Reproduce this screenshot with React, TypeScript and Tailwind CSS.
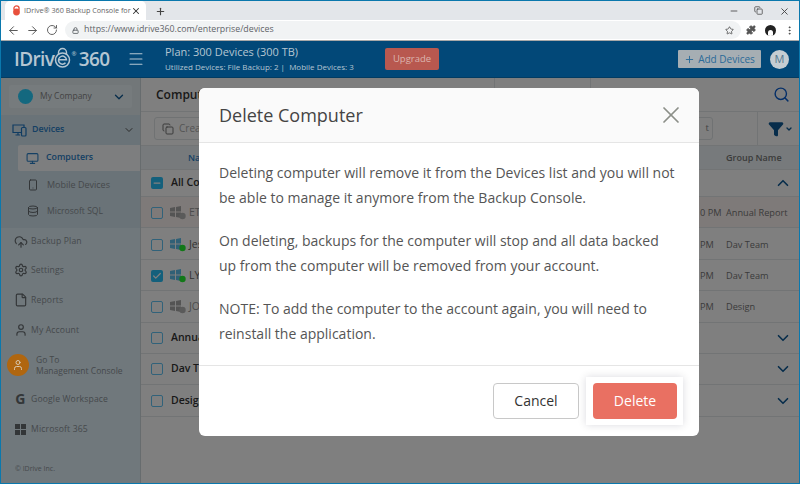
import { ArrowLeft, ArrowRight, ChevronDown, ChevronUp, Database, File, Filter, Lock, Menu, Minus, Monitor, MoreVertical, Plus, Puzzle, RotateCw, Search, Settings, Smartphone, Star, User, X, Check, CloudUpload, Copy } from 'lucide-react'
import type { ReactNode } from 'react'

function WinIcon({ online }: { online?: boolean }) {
  return (
    <svg width="16" height="14" viewBox="0 0 16 14" className="shrink-0">
      <g fill={online ? '#60c0ec' : '#a8a8a8'}>
        <path d="M0 2l5-1v4.500H0zM6 1l5-1v5.500H6zM0 6.500h5V11l-5-1zM6 6.500h5V12l-5-1z" />
      </g>
      <circle cx="12.500" cy="10" r="3.200" fill={online ? '#24f030' : '#b4b4b4'} />
    </svg>
  )
}

function Box({ state }: { state?: 'check' | 'minus' }) {
  if (state) {
    return (
      <span className="w-3 h-3 bg-[#28c0f8] rounded-[2px] flex items-center justify-center text-white shrink-0">
        {state === 'check' ? <Check size={10} strokeWidth={3} /> : <Minus size={10} strokeWidth={3} />}
      </span>
    )
  }
  return <span className="w-3 h-3 border border-[#62c4f4] rounded-[2px] shrink-0" />
}

function Row({ check, label, online, time, group, bold, chevron, tint, short }: {
  check?: 'check' | 'minus'
  label: string
  online?: boolean
  time?: string
  group?: string
  bold?: boolean
  chevron?: 'up' | 'down'
  tint?: boolean
  short?: boolean
}) {
  return (
    <div className={`flex items-center pl-[10px] border-b border-[#e4e8ea] shrink-0 ${short ? 'h-[27px]' : 'h-[31.4px]'} ${bold ? '' : 'pt-[2px]'} ${tint ? 'bg-[#fdf4f2]' : ''}`}>
      <Box state={check} />
      {!bold && <span className="ml-[7px] mr-[3px]"><WinIcon online={online} /></span>}
      <span className={`text-[10.5px] ${bold ? 'ml-2 font-semibold text-[#333]' : online ? 'text-[#666]' : 'text-[#999]'}`}>{label}</span>
      <span className="flex-1" />
      {time && <span className="text-[9.2px] text-[#777] w-[26px]">{time}</span>}
      {group && <span className="text-[9.2px] text-[#777] w-[73px]">{group}</span>}
      {chevron === 'up' && <ChevronUp size={18} strokeWidth={2.2} className="mr-[7px] text-[#0e5a96]" />}
      {chevron === 'down' && <ChevronDown size={18} strokeWidth={2.2} className="mr-[7px] text-[#0e5a96]" />}
    </div>
  )
}

function NavItem({ icon, label, first }: { icon: ReactNode; label: string; first?: boolean }) {
  return (
    <div className={`flex items-center pl-[10px] text-[8.6px] tracking-[0.15px] text-[#8c9398] ${first ? 'h-[27px]' : 'h-[30px]'}`}>
      <span className="w-[19px] flex justify-center text-[#666c70]">{icon}</span>
      <span className="ml-[1px]">{label}</span>
    </div>
  )
}

export default function App() {
  return (
    <div className="w-[800px] h-[484px] overflow-hidden flex flex-col border border-[#0a78ad] font-['Open_Sans',sans-serif]">
      {/* Browser chrome */}
      <div className="h-[19px] bg-[#e3e6ea] flex items-end pl-[4px] shrink-0">
        <div className="w-[141px] h-[19px] bg-white rounded-t-[5px] flex items-center pl-[7px] pr-[6px] text-[7.2px] text-[#666] whitespace-nowrap overflow-hidden">
          <svg width="9" height="11" viewBox="0 0 9 11" className="shrink-0 mr-[3px]">
            <circle cx="4.500" cy="3.500" r="2.600" fill="none" stroke="#e8503c" strokeWidth="1.300" />
            <circle cx="4.500" cy="7" r="3.400" fill="#e8503c" />
          </svg>
          <span className="flex-1">IDrive® 360 Backup Console for</span>
          <X size={10} strokeWidth={2.5} className="shrink-0 text-[#333]" />
        </div>
        <Plus size={11} strokeWidth={2.5} className="ml-[9px] mb-[3px] text-[#444]" />
        <span className="flex-1" />
        <Minus size={10} className="mb-[4px] mr-[15px] text-[#444]" />
        <Copy size={9} className="mb-[5px] mr-[16px] text-[#444]" />
        <X size={11} className="mb-[3px] mr-[9px] text-[#444]" />
      </div>
      <div className="h-[21px] bg-white flex items-center shrink-0 border-b border-[#a8a8a8]">
        <ArrowLeft size={13} strokeWidth={1.8} className="ml-[6px] text-[#555]" />
        <ArrowRight size={13} strokeWidth={1.8} className="ml-[6px] text-[#555]" />
        <RotateCw size={12} strokeWidth={1.8} className="ml-[7px] text-[#555]" />
        <div className="ml-[7px] w-[676px] h-[18px] rounded-full bg-[#f1f3f4] flex items-center pl-[7px] pr-[7px] text-[8.8px] text-[#5f6368]">
          <Lock size={7} strokeWidth={3} className="mr-[5px]" />
          <span className="flex-1">https://www.idrive360.com/enterprise/devices</span>
          <Star size={9} className="text-[#444]" />
        </div>
        <Puzzle size={10} fill="#555" className="ml-[5px] text-[#555]" />
        <span className="ml-[9px] w-[11px] h-[11px] rounded-full bg-[#222] flex items-end justify-center overflow-hidden"><span className="w-[5px] h-[6px] bg-white rounded-t-full" /></span>
        <MoreVertical size={11} className="ml-[8px] text-[#444]" />
      </div>

      <div className="flex-1 relative flex flex-col min-h-0">
        {/* App header */}
        <header className="relative z-10 h-[37px] bg-[#024878] border-b border-[#033c62] flex items-center shrink-0 text-[#b5c6d2]">
          <div className="ml-[13px] w-[100px] flex items-center text-[19px] font-semibold tracking-[-0.6px] whitespace-nowrap">
            <span>IDriv</span>
            <svg width="17" height="21" viewBox="0 0 17 21" className="-mt-[3px] shrink-0">
              <path d="M4.500 8V5.500a4 4 0 0 1 8 0V8" fill="none" stroke="#b5c6d2" strokeWidth="1.400" />
              <circle cx="8.500" cy="13" r="7" fill="none" stroke="#b5c6d2" strokeWidth="1.500" />
              <path d="M4.500 12.800h8a4 4 0 1 0-1 3" fill="none" stroke="#b5c6d2" strokeWidth="1.500" />
            </svg>
            <span className="text-[6px] -mt-[9px] mr-[3px]">®</span>
            <span>360</span>
          </div>
          <Menu size={18} strokeWidth={1.4} className="ml-[13px]" />
          <div className="ml-[20px] w-[220px]">
            <div className="text-[11px] leading-[14px]">Plan: 300 Devices (300 TB)</div>
            <div className="text-[8px] leading-[13px] mt-[1px] whitespace-nowrap">Utilized Devices: File Backup: 2 |&nbsp; Mobile Devices: 3</div>
          </div>
          <button className="w-[54px] h-[22px] bg-[#b8584f] rounded-[2px] text-[9.5px] text-[#dbb4ae]">Upgrade</button>
          <span className="flex-1" />
          <div className="w-[83px] h-[18px] bg-[#a6aeb3] rounded-[1px] flex items-center justify-center text-[10px] text-[#2a6a98]">
            <Plus size={11} className="mr-[3px]" />Add Devices
          </div>
          <span className="ml-[9px] mr-[10px] w-[19px] h-[19px] rounded-full bg-[#c6cdd2] text-[#55788f] text-[11px] flex items-center justify-center">M</span>
        </header>

        <div className="flex-1 flex min-h-0">
          {/* Sidebar */}
          <aside className="w-[140px] bg-[#e0f0f8] shrink-0 flex flex-col border-r border-[#cfd8dc]">
            <div className="pt-[7px] pb-[7px] pl-[8px] pr-[8px] bg-[#e4eef2]">
              <div className="h-[23px] bg-[#ecf6fa] rounded-[2px] flex items-center pl-[9px] pr-[6px] text-[8.5px] text-[#888]">
                <span className="w-[15px] h-[15px] rounded-full bg-[#28d0ff] mr-[7px]" />
                <span className="flex-1">My Company</span>
                <ChevronDown size={14} strokeWidth={2.2} className="text-[#0e5a96]" />
              </div>
            </div>
            <div className="bg-[#d4e6f0] pb-[4px]">
              <div className="h-[30px] flex items-center pl-[11px] pr-[5px] text-[8.8px] font-semibold text-[#2a80c8]">
                <svg width="15" height="13" viewBox="0 0 15 13" fill="none" stroke="#2078c4" strokeWidth="1.200" className="mr-[5px] shrink-0">
                  <path d="M9 8.500H1V1h11v2M6 8.500V11M3.500 11H8" />
                  <rect x="9.500" y="3.500" width="4.500" height="8.500" rx="1" />
                </svg>
                <span className="flex-1">Devices</span>
                <ChevronDown size={12} className="text-[#555]" />
              </div>
              <div className="ml-[17px] h-[26px] bg-white/90 rounded-l-[2px] flex items-center pl-[8px] text-[8.8px] font-semibold text-[#2a80c8]">
                <Monitor size={13} className="mr-[7px]" />Computers
              </div>
              <div className="h-[27px] pl-[26px] flex items-center text-[9px] text-[#8c9398]"><Smartphone size={12} className="mr-[8px] text-[#666c70]" />Mobile Devices</div>
              <div className="h-[26px] pl-[26px] flex items-center text-[8.6px] text-[#8c9398]"><Database size={12} className="mr-[8px] text-[#666c70]" />Microsoft SQL</div>
            </div>
            <NavItem first icon={<CloudUpload size={14} />} label="Backup Plan" />
            <NavItem icon={<Settings size={14} />} label="Settings" />
            <NavItem icon={<File size={14} />} label="Reports" />
            <NavItem icon={<User size={14} />} label="My Account" />
            <div className="h-[39px] flex items-center pl-[6px] text-[8.5px] leading-[11px] text-[#8c9398]">
              <span className="relative z-10 w-[22px] h-[22px] rounded-full bg-[#b0660f] flex items-center justify-center text-[#d8c8b0] mr-[7px]"><User size={12} /></span>
              <span>Go To<br />Management Console</span>
            </div>
            <NavItem icon={<span className="font-bold text-[14px] leading-none">G</span>} label="Google Workspace" />
            <NavItem icon={
              <svg width="11" height="11" viewBox="0 0 11 11" fill="#666c70"><path d="M0 0h5v5H0zM6 0h5v5H6zM0 6h5v5H0zM6 6h5v5H6z" /></svg>
            } label="Microsoft 365" />
            <span className="flex-1" />
            <div className="pl-[14px] pb-[9px] text-[7px] text-[#8c9398]">© IDrive Inc.</div>
          </aside>

          {/* Content */}
          <main className="flex-1 bg-white flex flex-col min-w-0">
            <div className="h-[34px] pl-[15px] border-b border-[#e4e8ea] flex items-stretch text-[12px] font-semibold text-[#333] shrink-0">
              <span className="flex-1 self-center">Computers</span>
              <span className="w-[97px] border-l border-r border-[#e4e8ea]" />
              <span className="w-[208px] flex items-center justify-end pr-[9px]">
                <Search size={17} className="text-[#0a5ed0]" />
              </span>
            </div>
            <div className="h-[34px] flex items-center pl-[13px] border-b border-[#e4e8ea] shrink-0">
              <div className="h-[23px] w-[120px] border border-[#e0e4e6] rounded-[3px] flex items-center pl-[7px] text-[10px] text-[#aaa]">
                <Copy size={12} className="mr-[5px] text-[#777]" />Create
              </div>
              <span className="flex-1" />
              <div className="h-[23px] w-[50px] mr-[44px] border border-[#e0e4e6] rounded-[3px] flex items-center justify-end pr-[3px] text-[9.5px] text-[#888]">t</div>
              <span className="h-full w-[42px] border-l border-[#e4e8ea] flex items-center pl-[10px]">
                <Filter size={16} fill="#0e5a96" className="text-[#0e5a96]" />
                <ChevronDown size={8} strokeWidth={4} className="ml-[1px] text-[#0e5a96]" />
              </span>
            </div>
            <div className="h-[24px] bg-[#eef4f8] flex items-center text-[9px] font-semibold border-b border-[#e4e8ea] shrink-0">
              <span className="ml-[47px] text-[#2a80c8] flex-1">Name</span>
              <span className="w-[73px] text-[#777]">Group Name</span>
            </div>
            <Row check="minus" label="All Computers" bold chevron="up" short />
            <Row label="ETHAN" tint time="0 PM" group="Annual Report" />
            <Row label="Jessica" online time="PM" group="Dav Team" />
            <Row check="check" label="LYDIA" online time="PM" group="Dav Team" />
            <Row label="JOHN" time="PM" group="Design" />
            <Row label="Annual Report" bold chevron="down" />
            <Row label="Dav Team" bold chevron="down" />
            <Row label="Design" bold chevron="down" />
          </main>
        </div>

        {/* Modal */}
        <div className="absolute inset-0 bg-black/50" />
        <div className="absolute z-20 left-[198px] top-[47px] w-[500px] h-[348px] bg-white rounded-[6px] overflow-hidden flex flex-col">
          <div className="h-[55px] bg-[#fafafa] border-b border-[#e5e5e5] flex items-center pl-[20px] pr-[14px] shrink-0">
            <span className="flex-1 text-[18px] text-[#444]">Delete Computer</span>
            <X size={28} strokeWidth={1.5} className="text-[#8c8f88]" />
          </div>
          <div className="flex-1 px-[20px] pt-[18px] text-[14px] leading-[24.5px] text-[#555]">
            <p>Deleting computer will remove it from the Devices list and you will not be able to manage it anymore from the Backup Console.</p>
            <p className="mt-[19px]">On deleting, backups for the computer will stop and all data backed up from the computer will be removed from your account.</p>
            <p className="mt-[19px]">NOTE: To add the computer to the account again, you will need to reinstall the application.</p>
          </div>
          <div className="h-[71px] border-t border-[#e5e5e5] flex items-center justify-end pr-[16px] shrink-0">
            <button className="w-[86px] h-[36px] pb-[2px] border border-[#c8c8c8] rounded-[4px] text-[14px] text-[#333] bg-white">Cancel</button>
            <div className="ml-[7px] pl-[7px] pr-[6px] py-[6px] bg-white shadow-[0_0_8px_rgba(0,0,40,0.15)]">
              <button className="w-[84px] h-[36px] pb-[2px] rounded-[4px] bg-[#e97062] text-white text-[14px]">Delete</button>
            </div>
          </div>
        </div>
      </div>
    </div>
  )
}
